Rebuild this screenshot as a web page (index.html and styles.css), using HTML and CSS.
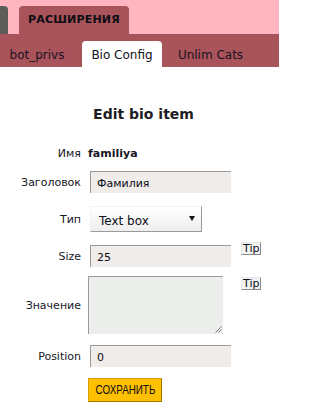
FILE: index.html
```html
<!DOCTYPE html>
<html>
<head>
<meta charset="utf-8">
<link rel="stylesheet" href="styles.css">
</head>
<body>
<div class="topbar">
  <div class="toptab toptab-gray"></div>
  <div class="toptab toptab-main">РАСШИРЕНИЯ</div>
</div>
<div class="subbar">
  <span class="subtab subtab-first">bot_privs</span>
  <span class="subtab subtab-active">Bio Config</span>
  <span class="subtab subtab-last">Unlim Cats</span>
</div>
<main class="content">
  <h1 class="title">Edit bio item</h1>
  <div class="row row-name">
    <div class="label">Имя</div>
    <div class="value">familiya</div>
  </div>
  <div class="row row-title">
    <div class="label">Заголовок</div>
    <div class="field">Фамилия</div>
  </div>
  <div class="row row-type">
    <div class="label">Тип</div>
    <div class="select"><span>Text box</span><svg class="arrow" width="6" height="5" viewBox="0 0 6 5"><polygon points="0,0 6,0 3,5" fill="#111"/></svg></div>
  </div>
  <div class="row row-size">
    <div class="label">Size</div>
    <div class="field">25</div>
    <div class="tip tip-size">Tip</div>
  </div>
  <div class="row row-value">
    <div class="label">Значение</div>
    <div class="textarea"><svg class="grip" width="7" height="7" viewBox="0 0 7 7"><path d="M6.5 0.5 L0.5 6.5 M6.5 3.5 L3.5 6.5" stroke="#777" stroke-width="1"/></svg></div>
    <div class="tip tip-value">Tip</div>
  </div>
  <div class="row row-pos">
    <div class="label">Position</div>
    <div class="field">0</div>
  </div>
  <div class="row row-btn">
    <div class="label"></div>
    <div class="button"><span class="button-text">СОХРАНИТЬ</span></div>
  </div>
</main>
</body>
</html>
```
FILE: styles.css
```css
html, body {
  margin: 0;
  padding: 0;
  background: #fff;
}
body {
  width: 279px;
  overflow: hidden;
  font-family: "DejaVu Sans", Verdana, sans-serif;
  color: #16161e;
}
.topbar {
  height: 28px;
  padding-top: 6px;
  background: #ffb6c1;
  display: flex;
  align-items: flex-end;
}
.toptab {
  height: 28px;
  border-radius: 4px 4px 0 0;
}
.toptab-gray {
  width: 8px;
  background: #5c5c58;
  border-radius: 0 4px 0 0;
  margin-right: 11px;
}
.toptab-main {
  width: 110px;
  background: #a9535a;
  color: #0d0d14;
  font-weight: bold;
  font-size: 11px;
  line-height: 27px;
  text-align: center;
  letter-spacing: 0.2px;
}
.subbar {
  height: 26px;
  padding-top: 7px;
  background: #a9535a;
  display: flex;
  align-items: flex-end;
}
.subtab {
  height: 26px;
  line-height: 28px;
  font-size: 12px;
  text-align: center;
  color: #1a1424;
}
.subtab-first {
  width: 74px;
  margin-right: 8px;
}
.subtab-active {
  width: 80px;
  background: #fff;
  border-radius: 4px 4px 0 0;
  color: #101018;
}
.subtab-last {
  width: 81px;
  margin-left: 8px;
}
.content {
  padding-left: 8px;
}
.title {
  margin: 38px 0 0 0;
  font-size: 14px;
  line-height: 18px;
  font-weight: bold;
  text-align: center;
  color: #1d1d22;
}
.row {
  display: grid;
  grid-template-columns: 73px 146px auto;
  column-gap: 7px;
  align-items: center;
  font-size: 11px;
}
.label {
  text-align: right;
  line-height: 13px;
}
.row-name {
  padding-top: 24px;
}
.value {
  font-weight: bold;
  line-height: 13px;
}
.row-title { padding-top: 11px; }
.row-type { padding-top: 13px; }
.row-size { padding-top: 13px; }
.row-value { padding-top: 9px; }
.row-pos { padding-top: 11px; }
.row-btn { padding-top: 11px; }
.field {
  box-sizing: border-box;
  width: 141px;
  height: 22px;
  margin-left: 2px;
  padding: 4px 0 0 6px;
  background: #f0ecea;
  border-top: 1px solid #9a9a9a;
  border-left: 1px solid #9a9a9a;
  font-size: 11px;
  line-height: 15px;
  color: #0c0c18;
}
.select {
  box-sizing: border-box;
  width: 112px;
  height: 26px;
  margin-left: 2px;
  padding: 3px 6px 0 8px;
  display: flex;
  align-items: center;
  justify-content: space-between;
  background: linear-gradient(#ffffff, #eeeeee);
  border-right: 1px solid #9a9a9a;
  border-bottom: 1px solid #9a9a9a;
  border-top: 1px solid #f2f2f2;
  border-left: 1px solid #f2f2f2;
  font-size: 12px;
  color: #0c0c18;
}
.arrow {
  margin-top: -4px;
}
.textarea {
  box-sizing: border-box;
  position: relative;
  width: 135px;
  height: 58px;
  background: #eceeeb;
  border-top: 1px solid #9a9a9a;
  border-left: 1px solid #9a9a9a;
}
.grip {
  position: absolute;
  right: 1px;
  bottom: 1px;
}
.tip {
  align-self: start;
  justify-self: start;
  box-sizing: border-box;
  height: 13px;
  padding: 0 1px;
  background: #f3f3f3;
  border-right: 1px solid #8a8a8a;
  border-bottom: 1px solid #8a8a8a;
  border-top: 1px solid #e8e8e8;
  border-left: 1px solid #e8e8e8;
  font-size: 11px;
  line-height: 11px;
  color: #0c0c18;
}
.tip-size { margin-top: -3px; }
.tip-value { margin-top: 1px; }
.button {
  justify-self: start;
  box-sizing: border-box;
  height: 24px;
  width: 74px;
  background: #ffc000;
  border: 1px solid #d6a000;
  border-right-color: #a07800;
  border-bottom-color: #a07800;
  text-align: center;
  color: #0c0c10;
}
.button-text {
  display: inline-block;
  font-family: "Liberation Sans", Arial, sans-serif;
  font-size: 12px;
  line-height: 22px;
  transform: scaleX(0.82);
}
```
